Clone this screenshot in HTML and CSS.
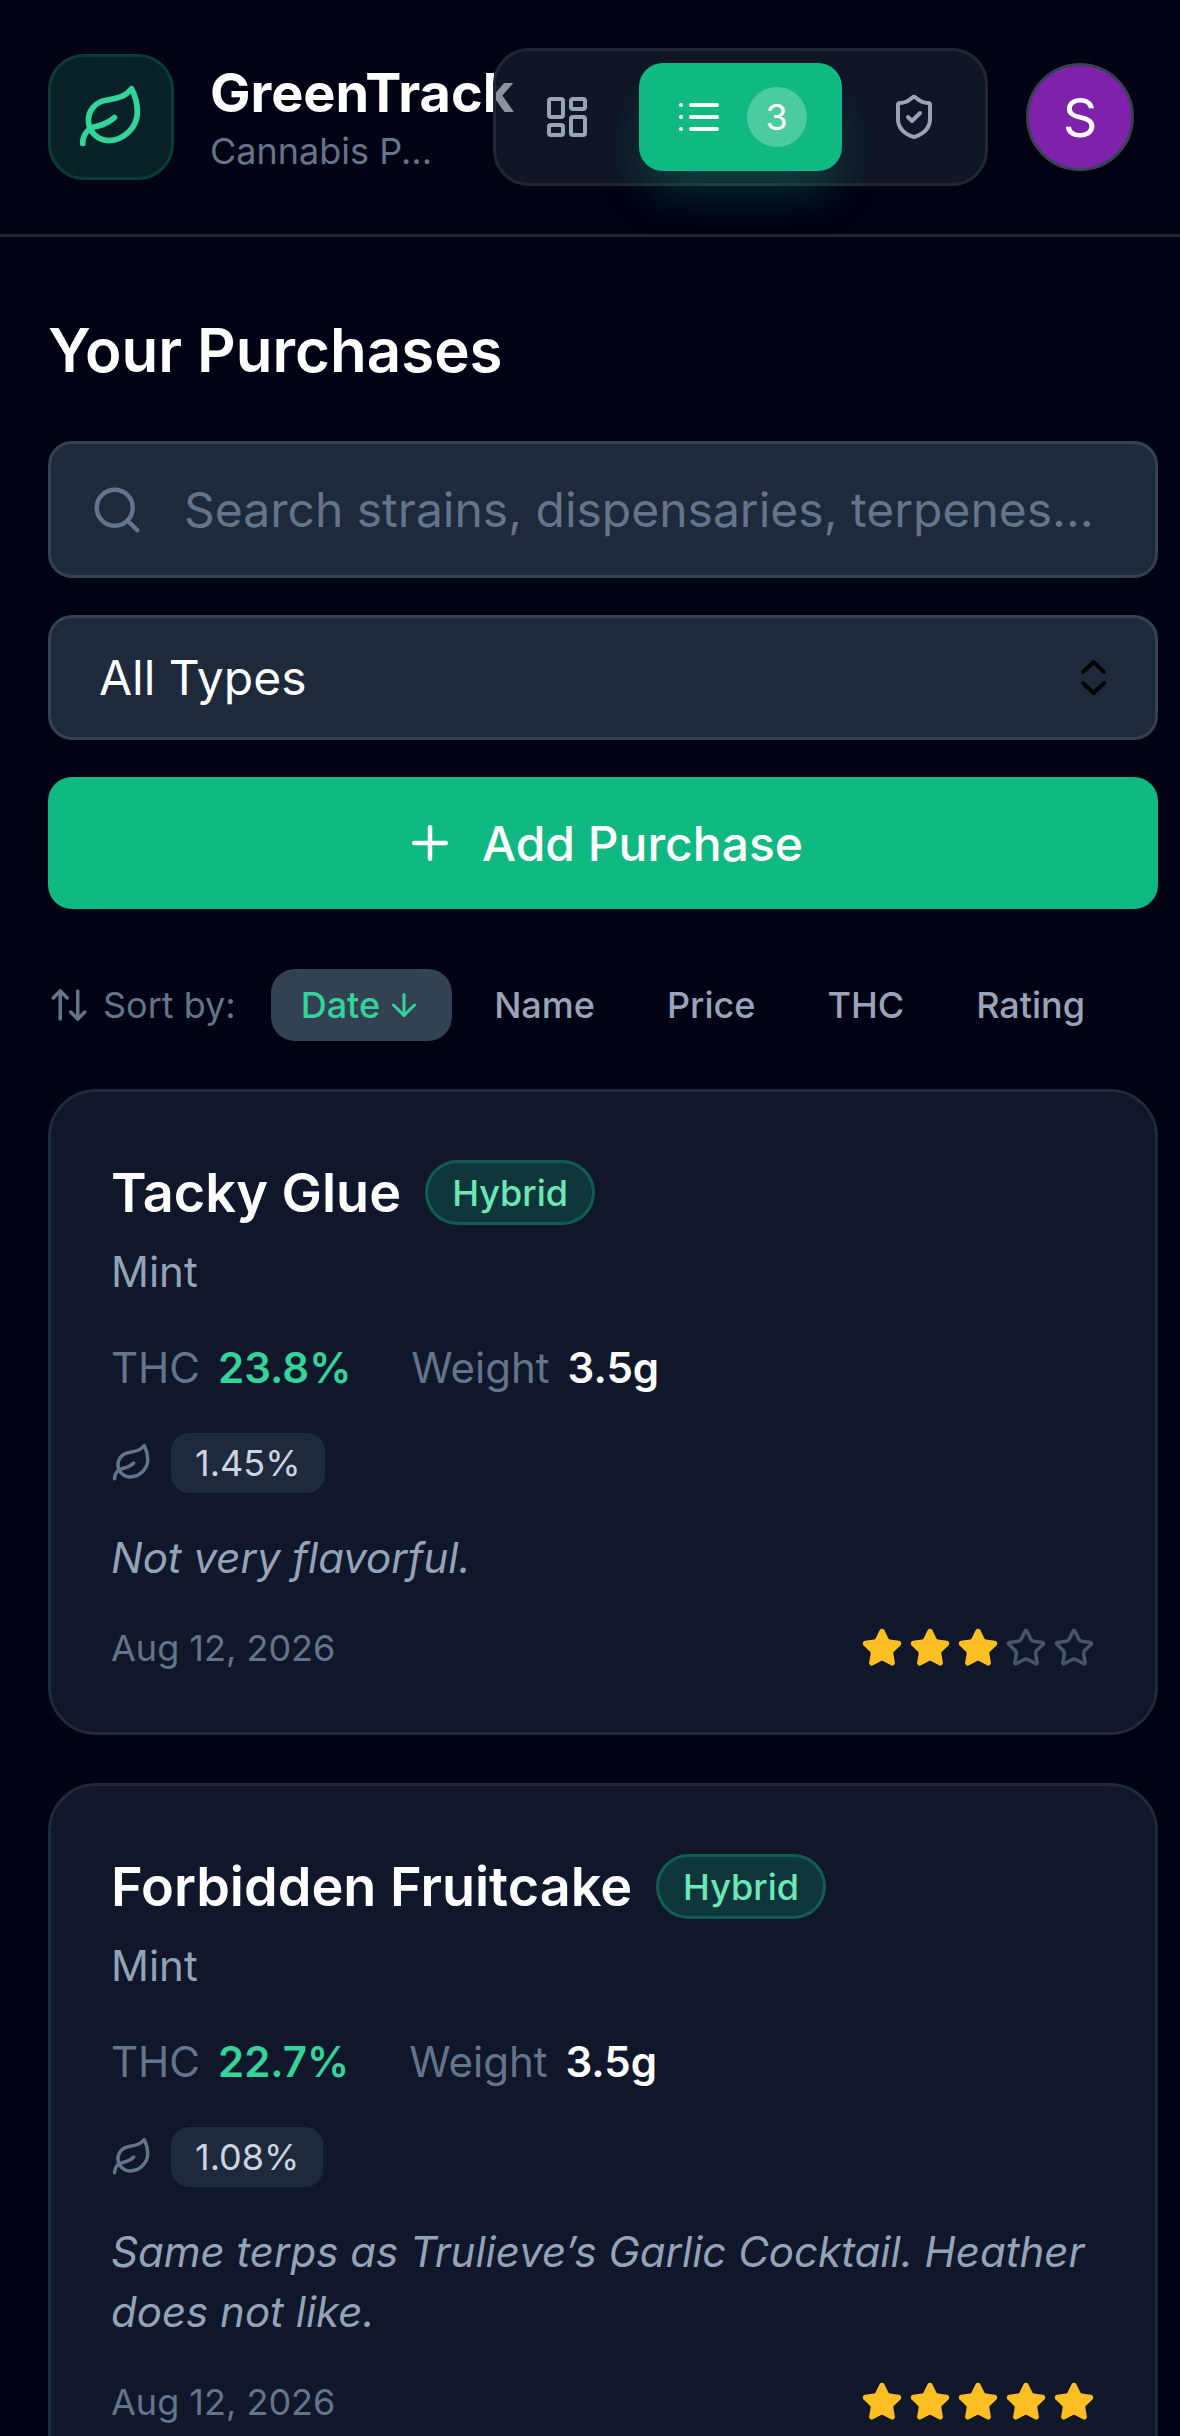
FILE: index.html
```html
<!DOCTYPE html>
<html lang="en">
<head>
    <meta charset="UTF-8">
    <meta name="viewport" content="width=device-width, initial-scale=1.0">
    <title>GreenTrack</title>
    <link rel="stylesheet" href="styles.css">
</head>
<body>
    <header class="header">
        <div class="brand">
            <div class="logo">
                <svg class="icon logo-icon" viewBox="0 0 24 24"><path d="M11 20A7 7 0 0 1 9.8 6.1C15.5 5 17 4.48 19 2c1 2 2 4.18 2 8 0 5.5-4.78 10-10 10Z"/><path d="M2 21c0-3 1.85-5.36 5.08-6C9.5 14.52 12 13 13 12"/></svg>
            </div>
            <div class="brand-text">
                <h1>GreenTrack</h1>
                <p>Cannabis P...</p>
            </div>
        </div>
        <nav class="nav">
            <button class="nav-btn" type="button">
                <svg class="icon nav-icon" viewBox="0 0 24 24"><rect x="3" y="3" width="7" height="9" rx="1"/><rect x="14" y="3" width="7" height="5" rx="1"/><rect x="14" y="12" width="7" height="9" rx="1"/><rect x="3" y="16" width="7" height="5" rx="1"/></svg>
            </button>
            <button class="nav-btn active" type="button">
                <svg class="icon nav-icon" viewBox="0 0 24 24"><path d="M3 12h.01"/><path d="M3 18h.01"/><path d="M3 6h.01"/><path d="M8 12h13"/><path d="M8 18h13"/><path d="M8 6h13"/></svg>
                <span class="nav-count">3</span>
            </button>
            <button class="nav-btn" type="button">
                <svg class="icon nav-icon" viewBox="0 0 24 24"><path d="M20 13c0 5-3.5 7.5-7.66 8.95a1 1 0 0 1-.67-.01C7.5 20.5 4 18 4 13V6a1 1 0 0 1 1-1c2 0 4.5-1.2 6.24-2.72a1.17 1.17 0 0 1 1.52 0C14.51 3.81 17 5 19 5a1 1 0 0 1 1 1z"/><path d="m9 12 2 2 4-4"/></svg>
            </button>
        </nav>
        <div class="avatar">S</div>
    </header>

    <main class="main">
        <h2>Your Purchases</h2>

        <label class="search">
            <svg class="icon search-icon" viewBox="0 0 24 24"><path d="m21 21-4.34-4.34"/><circle cx="11" cy="11" r="8"/></svg>
            <input type="text" placeholder="Search strains, dispensaries, terpenes...">
        </label>

        <label class="type-filter">
            <select>
                <option>All Types</option>
                <option>Hybrid</option>
                <option>Indica</option>
                <option>Sativa</option>
            </select>
            <svg class="select-arrows" viewBox="0 0 27 37"><path d="M3 13 13.500 3 24 13"/><path d="M3 24 13.500 34 24 24"/></svg>
        </label>

        <button class="add-btn" type="button">
            <svg class="icon add-icon" viewBox="0 0 24 24"><path d="M5 12h14"/><path d="M12 5v14"/></svg>
            Add Purchase
        </button>

        <div class="sort-row">
            <svg class="icon sort-icon" viewBox="0 0 24 24"><path d="m21 16-4 4-4-4"/><path d="M17 20V4"/><path d="m3 8 4-4 4 4"/><path d="M7 4v16"/></svg>
            <span class="sort-label">Sort by:</span>
            <button class="sort-btn active" type="button">Date <svg class="icon sort-arrow" viewBox="0 0 24 24"><path d="M12 5v14"/><path d="m19 12-7 7-7-7"/></svg></button>
            <button class="sort-btn" type="button">Name</button>
            <button class="sort-btn" type="button">Price</button>
            <button class="sort-btn" type="button">THC</button>
            <button class="sort-btn" type="button">Rating</button>
        </div>

        <article class="card">
            <div class="card-title">
                <h3>Tacky Glue</h3>
                <span class="badge">Hybrid</span>
            </div>
            <p class="dispensary">Mint</p>
            <div class="stats">
                <span class="stat"><span class="stat-label">THC</span><span class="stat-thc">23.8%</span></span>
                <span class="stat"><span class="stat-label">Weight</span><span class="stat-weight">3.5g</span></span>
            </div>
            <div class="terps">
                <svg class="icon terp-icon" viewBox="0 0 24 24"><path d="M11 20A7 7 0 0 1 9.8 6.1C15.5 5 17 4.48 19 2c1 2 2 4.18 2 8 0 5.5-4.78 10-10 10Z"/><path d="M2 21c0-3 1.85-5.36 5.08-6C9.5 14.52 12 13 13 12"/></svg>
                <span class="terp-chip">1.45%</span>
            </div>
            <p class="note">Not very flavorful.</p>
            <div class="card-footer">
                <span class="date">Aug 12, 2026</span>
                <div class="stars">
                    <svg class="star on" viewBox="0 0 24 24"><path d="M11.525 2.295a.53.53 0 0 1 .95 0l2.31 4.679a2.123 2.123 0 0 0 1.595 1.16l5.166.756a.53.53 0 0 1 .294.904l-3.736 3.638a2.123 2.123 0 0 0-.611 1.878l.882 5.14a.53.53 0 0 1-.771.56l-4.618-2.428a2.122 2.122 0 0 0-1.973 0L6.396 21.01a.53.53 0 0 1-.77-.56l.881-5.139a2.122 2.122 0 0 0-.611-1.879L2.16 9.795a.53.53 0 0 1 .294-.906l5.165-.755a2.122 2.122 0 0 0 1.597-1.16z"/></svg>
                    <svg class="star on" viewBox="0 0 24 24"><path d="M11.525 2.295a.53.53 0 0 1 .95 0l2.31 4.679a2.123 2.123 0 0 0 1.595 1.16l5.166.756a.53.53 0 0 1 .294.904l-3.736 3.638a2.123 2.123 0 0 0-.611 1.878l.882 5.14a.53.53 0 0 1-.771.56l-4.618-2.428a2.122 2.122 0 0 0-1.973 0L6.396 21.01a.53.53 0 0 1-.77-.56l.881-5.139a2.122 2.122 0 0 0-.611-1.879L2.16 9.795a.53.53 0 0 1 .294-.906l5.165-.755a2.122 2.122 0 0 0 1.597-1.16z"/></svg>
                    <svg class="star on" viewBox="0 0 24 24"><path d="M11.525 2.295a.53.53 0 0 1 .95 0l2.31 4.679a2.123 2.123 0 0 0 1.595 1.16l5.166.756a.53.53 0 0 1 .294.904l-3.736 3.638a2.123 2.123 0 0 0-.611 1.878l.882 5.14a.53.53 0 0 1-.771.56l-4.618-2.428a2.122 2.122 0 0 0-1.973 0L6.396 21.01a.53.53 0 0 1-.77-.56l.881-5.139a2.122 2.122 0 0 0-.611-1.879L2.16 9.795a.53.53 0 0 1 .294-.906l5.165-.755a2.122 2.122 0 0 0 1.597-1.16z"/></svg>
                    <svg class="star" viewBox="0 0 24 24"><path d="M11.525 2.295a.53.53 0 0 1 .95 0l2.31 4.679a2.123 2.123 0 0 0 1.595 1.16l5.166.756a.53.53 0 0 1 .294.904l-3.736 3.638a2.123 2.123 0 0 0-.611 1.878l.882 5.14a.53.53 0 0 1-.771.56l-4.618-2.428a2.122 2.122 0 0 0-1.973 0L6.396 21.01a.53.53 0 0 1-.77-.56l.881-5.139a2.122 2.122 0 0 0-.611-1.879L2.16 9.795a.53.53 0 0 1 .294-.906l5.165-.755a2.122 2.122 0 0 0 1.597-1.16z"/></svg>
                    <svg class="star" viewBox="0 0 24 24"><path d="M11.525 2.295a.53.53 0 0 1 .95 0l2.31 4.679a2.123 2.123 0 0 0 1.595 1.16l5.166.756a.53.53 0 0 1 .294.904l-3.736 3.638a2.123 2.123 0 0 0-.611 1.878l.882 5.14a.53.53 0 0 1-.771.56l-4.618-2.428a2.122 2.122 0 0 0-1.973 0L6.396 21.01a.53.53 0 0 1-.77-.56l.881-5.139a2.122 2.122 0 0 0-.611-1.879L2.16 9.795a.53.53 0 0 1 .294-.906l5.165-.755a2.122 2.122 0 0 0 1.597-1.16z"/></svg>
                </div>
            </div>
        </article>

        <article class="card">
            <div class="card-title">
                <h3>Forbidden Fruitcake</h3>
                <span class="badge">Hybrid</span>
            </div>
            <p class="dispensary">Mint</p>
            <div class="stats">
                <span class="stat"><span class="stat-label">THC</span><span class="stat-thc">22.7%</span></span>
                <span class="stat"><span class="stat-label">Weight</span><span class="stat-weight">3.5g</span></span>
            </div>
            <div class="terps">
                <svg class="icon terp-icon" viewBox="0 0 24 24"><path d="M11 20A7 7 0 0 1 9.8 6.1C15.5 5 17 4.48 19 2c1 2 2 4.18 2 8 0 5.5-4.78 10-10 10Z"/><path d="M2 21c0-3 1.85-5.36 5.08-6C9.5 14.52 12 13 13 12"/></svg>
                <span class="terp-chip">1.08%</span>
            </div>
            <p class="note">Same terps as Trulieve’s Garlic Cocktail. Heather does not like.</p>
            <div class="card-footer">
                <span class="date">Aug 12, 2026</span>
                <div class="stars">
                    <svg class="star on" viewBox="0 0 24 24"><path d="M11.525 2.295a.53.53 0 0 1 .95 0l2.31 4.679a2.123 2.123 0 0 0 1.595 1.16l5.166.756a.53.53 0 0 1 .294.904l-3.736 3.638a2.123 2.123 0 0 0-.611 1.878l.882 5.14a.53.53 0 0 1-.771.56l-4.618-2.428a2.122 2.122 0 0 0-1.973 0L6.396 21.01a.53.53 0 0 1-.77-.56l.881-5.139a2.122 2.122 0 0 0-.611-1.879L2.16 9.795a.53.53 0 0 1 .294-.906l5.165-.755a2.122 2.122 0 0 0 1.597-1.16z"/></svg>
                    <svg class="star on" viewBox="0 0 24 24"><path d="M11.525 2.295a.53.53 0 0 1 .95 0l2.31 4.679a2.123 2.123 0 0 0 1.595 1.16l5.166.756a.53.53 0 0 1 .294.904l-3.736 3.638a2.123 2.123 0 0 0-.611 1.878l.882 5.14a.53.53 0 0 1-.771.56l-4.618-2.428a2.122 2.122 0 0 0-1.973 0L6.396 21.01a.53.53 0 0 1-.77-.56l.881-5.139a2.122 2.122 0 0 0-.611-1.879L2.16 9.795a.53.53 0 0 1 .294-.906l5.165-.755a2.122 2.122 0 0 0 1.597-1.16z"/></svg>
                    <svg class="star on" viewBox="0 0 24 24"><path d="M11.525 2.295a.53.53 0 0 1 .95 0l2.31 4.679a2.123 2.123 0 0 0 1.595 1.16l5.166.756a.53.53 0 0 1 .294.904l-3.736 3.638a2.123 2.123 0 0 0-.611 1.878l.882 5.14a.53.53 0 0 1-.771.56l-4.618-2.428a2.122 2.122 0 0 0-1.973 0L6.396 21.01a.53.53 0 0 1-.77-.56l.881-5.139a2.122 2.122 0 0 0-.611-1.879L2.16 9.795a.53.53 0 0 1 .294-.906l5.165-.755a2.122 2.122 0 0 0 1.597-1.16z"/></svg>
                    <svg class="star on" viewBox="0 0 24 24"><path d="M11.525 2.295a.53.53 0 0 1 .95 0l2.31 4.679a2.123 2.123 0 0 0 1.595 1.16l5.166.756a.53.53 0 0 1 .294.904l-3.736 3.638a2.123 2.123 0 0 0-.611 1.878l.882 5.14a.53.53 0 0 1-.771.56l-4.618-2.428a2.122 2.122 0 0 0-1.973 0L6.396 21.01a.53.53 0 0 1-.77-.56l.881-5.139a2.122 2.122 0 0 0-.611-1.879L2.16 9.795a.53.53 0 0 1 .294-.906l5.165-.755a2.122 2.122 0 0 0 1.597-1.16z"/></svg>
                    <svg class="star on" viewBox="0 0 24 24"><path d="M11.525 2.295a.53.53 0 0 1 .95 0l2.31 4.679a2.123 2.123 0 0 0 1.595 1.16l5.166.756a.53.53 0 0 1 .294.904l-3.736 3.638a2.123 2.123 0 0 0-.611 1.878l.882 5.14a.53.53 0 0 1-.771.56l-4.618-2.428a2.122 2.122 0 0 0-1.973 0L6.396 21.01a.53.53 0 0 1-.77-.56l.881-5.139a2.122 2.122 0 0 0-.611-1.879L2.16 9.795a.53.53 0 0 1 .294-.906l5.165-.755a2.122 2.122 0 0 0 1.597-1.16z"/></svg>
                </div>
            </div>
        </article>
    </main>
</body>
</html>
```

FILE: styles.css
```css
* {
    margin: 0;
    padding: 0;
    box-sizing: border-box;
    font-family: 'Inter', 'Liberation Sans', sans-serif;
}

html, body {
    height: 100%;
    overflow: hidden;
}

body {
    background-color: #010214;
    color: #ffffff;
}

button {
    border: none;
    background: none;
    color: inherit;
    cursor: pointer;
}

.icon {
    display: block;
    flex: none;
    fill: none;
    stroke: currentColor;
    stroke-width: 2;
    stroke-linecap: round;
    stroke-linejoin: round;
}

/* header */
.header {
    display: flex;
    align-items: center;
    height: 237px;
    padding: 48px 46px 48px 48px;
    border-bottom: 3px solid #1e2537;
}

.brand {
    flex: 1;
    min-width: 0;
    display: flex;
    align-items: center;
    gap: 36px;
}

.logo {
    flex: none;
    width: 126px;
    height: 126px;
    display: flex;
    align-items: center;
    justify-content: center;
    background-color: #062226;
    border: 3px solid #0c3a38;
    border-radius: 36px;
}

.logo-icon {
    width: 69px;
    height: 69px;
    color: #34d399;
}

.brand-text {
    min-width: 0;
    padding-bottom: 5px;
}

.brand-text h1 {
    font-size: 54px;
    line-height: 72px;
    font-weight: 700;
    white-space: nowrap;
}

.brand-text p {
    font-size: 36px;
    line-height: 44px;
    color: #64748b;
}

.nav {
    position: relative;
    flex: none;
    display: flex;
    gap: 18px;
    margin-left: 45px;
    padding: 12px 17px;
    background-color: rgba(30, 41, 59, 0.5);
    border: 3px solid #1f2636;
    border-radius: 36px;
}

.nav-btn {
    display: flex;
    align-items: center;
    justify-content: center;
    gap: 24px;
    width: 108px;
    height: 108px;
    color: #9aa3b8;
    border-radius: 24px;
}

.nav-btn.active {
    width: 203px;
    color: #ffffff;
    background-color: #10b981;
    box-shadow: 0 30px 45px -9px rgba(16, 185, 129, 0.25);
}

.nav-icon {
    width: 48px;
    height: 48px;
}

.nav-count {
    width: 60px;
    height: 60px;
    display: flex;
    align-items: center;
    justify-content: center;
    font-size: 36px;
    background-color: rgba(255, 255, 255, 0.25);
    border-radius: 50%;
}

.avatar {
    flex: none;
    width: 108px;
    height: 108px;
    margin-left: 38px;
    display: flex;
    align-items: center;
    justify-content: center;
    font-size: 54px;
    background-color: #7e22ab;
    border: 3px solid #374151;
    border-radius: 50%;
}

/* filters */
.main {
    padding: 71px 22px 0 48px;
}

.main h2 {
    font-size: 60px;
    line-height: 84px;
    font-weight: 600;
    margin-bottom: 49px;
}

.search, .type-filter {
    display: flex;
    align-items: center;
    background-color: #1e293b;
    border: 3px solid #334155;
    border-radius: 24px;
}

.search {
    height: 137px;
    padding: 0 36px 0 39px;
    gap: 40px;
    margin-bottom: 37px;
}

.search-icon {
    width: 54px;
    height: 54px;
    color: #64748b;
}

.search input {
    flex: 1;
    min-width: 0;
    border: none;
    outline: none;
    background: none;
    color: #ffffff;
    font-size: 48px;
}

.search input::placeholder {
    color: #64748b;
}

.type-filter {
    height: 125px;
    padding: 0 48px;
    margin-bottom: 37px;
}

.type-filter select {
    flex: 1;
    appearance: none;
    border: none;
    outline: none;
    background: none;
    color: #ffffff;
    font-size: 48px;
}

.select-arrows {
    flex: none;
    width: 27px;
    height: 37px;
    fill: none;
    stroke: #000000;
    stroke-width: 4;
    stroke-linecap: round;
    stroke-linejoin: round;
}

.add-btn {
    width: 100%;
    height: 132px;
    display: flex;
    align-items: center;
    justify-content: center;
    gap: 25px;
    font-size: 48px;
    font-weight: 500;
    color: #ffffff;
    background-color: #10b981;
    border-radius: 24px;
    margin-bottom: 60px;
}

.add-icon {
    width: 54px;
    height: 54px;
}

/* sort */
.sort-row {
    display: flex;
    align-items: center;
    height: 72px;
    margin-bottom: 48px;
    color: #64748b;
    white-space: nowrap;
}

.sort-icon {
    width: 42px;
    height: 42px;
    margin-right: 13px;
}

.sort-label {
    font-size: 36px;
    margin-right: 35px;
}

.sort-btn {
    display: flex;
    align-items: center;
    gap: 6px;
    height: 72px;
    padding: 0 30px;
    margin-right: 12px;
    font-size: 36px;
    font-weight: 500;
    color: #9aa3b8;
    border-radius: 24px;
}

.sort-btn.active {
    color: #34d399;
    background-color: #334155;
}

.sort-arrow {
    width: 36px;
    height: 36px;
}

/* purchase cards */
.card {
    padding: 60px 60px 57px;
    margin-bottom: 48px;
    background-color: #10172a;
    border: 3px solid #1e293b;
    border-radius: 48px;
}

.card-title {
    display: flex;
    align-items: center;
    gap: 24px;
    height: 81px;
}

.card-title h3 {
    font-size: 54px;
    font-weight: 600;
}

.badge {
    display: flex;
    align-items: center;
    height: 65px;
    padding: 0 24px;
    font-size: 36px;
    font-weight: 500;
    color: #6ee7b7;
    background-color: rgba(16, 185, 129, 0.2);
    border: 3px solid rgba(16, 185, 129, 0.3);
    border-radius: 33px;
}

.dispensary {
    margin-top: 7px;
    font-size: 42px;
    line-height: 63px;
    color: #94a3b8;
}

.stats {
    display: flex;
    gap: 60px;
    margin-top: 33px;
    font-size: 42px;
    line-height: 63px;
}

.stat {
    display: flex;
    gap: 18px;
}

.stat-label {
    color: #64748b;
}

.stat-thc {
    color: #34d399;
    font-weight: 600;
}

.stat-weight {
    color: #ffffff;
    font-weight: 600;
}

.terps {
    display: flex;
    align-items: center;
    gap: 18px;
    margin-top: 34px;
}

.terp-icon {
    width: 42px;
    height: 42px;
    color: #64748b;
}

.terp-chip {
    display: flex;
    align-items: center;
    height: 60px;
    padding: 0 24px;
    font-size: 36px;
    color: #cbd5e1;
    background-color: #1e293b;
    border-radius: 18px;
}

.note {
    margin-top: 35px;
    font-size: 42px;
    line-height: 60px;
    font-style: italic;
    color: #94a3b8;
}

.card-footer {
    display: flex;
    align-items: center;
    justify-content: space-between;
    height: 54px;
    margin-top: 33px;
}

.date {
    font-size: 36px;
    color: #64748b;
}

.stars {
    display: flex;
    gap: 6px;
}

.star {
    display: block;
    width: 42px;
    height: 42px;
    fill: none;
    stroke: #475569;
    stroke-width: 2;
    stroke-linecap: round;
    stroke-linejoin: round;
}

.star.on {
    fill: #fbbf24;
    stroke: #fbbf24;
}
```
